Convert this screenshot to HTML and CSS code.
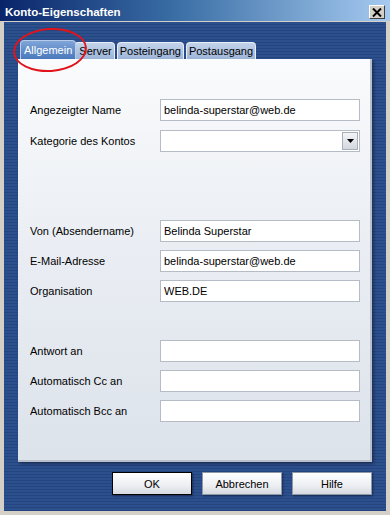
FILE: index.html
```html
<!DOCTYPE html>
<html lang="de">
<head>
  <meta charset="UTF-8">
  <title>Konto-Eigenschaften</title>
  <link rel="stylesheet" href="styles.css">
</head>
<body>
  <div class="window">
    <div class="titlebar">
      <span class="title">Konto-Eigenschaften</span>
      <span class="close-btn">
        <svg width="10" height="9" viewBox="0 0 10 9"><path d="M1 0.5 L9 8.5 M9 0.5 L1 8.5" stroke="#000" stroke-width="2"/></svg>
      </span>
    </div>

    <div class="dialog-body">
      <div class="tabs">
        <div class="tab active">Allgemein</div>
        <div class="tab tab-server">Server</div>
        <div class="tab">Posteingang</div>
        <div class="tab">Postausgang</div>
      </div>

      <div class="panel">
        <div class="group group-first">
          <div class="row">
            <label>Angezeigter Name</label>
            <div class="field">belinda-superstar@web.de</div>
          </div>
          <div class="row">
            <label>Kategorie des Kontos</label>
            <div class="field select">
              <span class="drop-btn">
                <svg width="7" height="4" viewBox="0 0 7 4"><path d="M0 0 H7 L3.5 4 Z" fill="#000"/></svg>
              </span>
            </div>
          </div>
        </div>

        <div class="group group-sender">
          <div class="row">
            <label>Von (Absendername)</label>
            <div class="field">Belinda Superstar</div>
          </div>
          <div class="row">
            <label>E-Mail-Adresse</label>
            <div class="field">belinda-superstar@web.de</div>
          </div>
          <div class="row">
            <label>Organisation</label>
            <div class="field">WEB.DE</div>
          </div>
        </div>

        <div class="group group-reply">
          <div class="row">
            <label>Antwort an</label>
            <div class="field"></div>
          </div>
          <div class="row">
            <label>Automatisch Cc an</label>
            <div class="field"></div>
          </div>
          <div class="row">
            <label>Automatisch Bcc an</label>
            <div class="field"></div>
          </div>
        </div>
      </div>

      <div class="buttons">
        <button class="btn btn-default">OK</button>
        <button class="btn">Abbrechen</button>
        <button class="btn">Hilfe</button>
      </div>
    </div>

    <!-- red highlight around the first tab -->
    <div class="highlight"></div>
  </div>
</body>
</html>
```

FILE: styles.css
```css
body {
  margin: 0;
  padding: 0;
  background-color: #d4d0c8;
  font-family: 'Liberation Sans', Arial, sans-serif;
  font-size: 11px;
}
.window {
  position: relative;
  width: 390px;
  height: 515px;
  box-sizing: border-box;
  border: 4px solid #d4d0c8;
  border-top: none;
  display: flex;
  flex-direction: column;
  background-color: #d4d0c8;
}
.titlebar {
  height: 22px;
  box-sizing: border-box;
  margin: 0 -4px;
  padding: 3px 4px 0 5px;
  display: flex;
  align-items: center;
  justify-content: space-between;
  background: linear-gradient(to right, #0a246a 0%, #3a6ea5 45%, #a6caf0 100%);
  border-bottom: 1px solid #d4d0c8;
}
.title {
  color: white;
  font-weight: bold;
  font-size: 11.5px;
}
.close-btn {
  width: 16px;
  height: 14px;
  box-sizing: border-box;
  background-color: #d4d0c8;
  border: 1px solid;
  border-color: #fff #404040 #404040 #fff;
  display: flex;
  align-items: center;
  justify-content: center;
  margin-right: 1px;
}
.dialog-body {
  flex: 1;
  padding: 18px 14px 0 14px;
  background: repeating-linear-gradient(to bottom, #2c4f8e 0px, #2c4f8e 2px, #25457f 2px, #25457f 3px);
  display: flex;
  flex-direction: column;
}
.tabs {
  display: flex;
  align-items: flex-end;
  height: 19px;
  padding-left: 2px;
  gap: 2px;
}
.tab {
  height: 17px;
  padding: 0 2px;
  box-sizing: border-box;
  display: flex;
  align-items: center;
  color: #000;
  background: linear-gradient(to bottom, #c3d3ea, #9db5d9);
  border: 1px solid #e8eef8;
  border-bottom: none;
  border-radius: 4px 4px 0 0;
}
.tab.active {
  height: 19px;
  padding: 0 3px;
  color: white;
  background: linear-gradient(to bottom, #7fa5d8, #4a78bc);
  border-color: #b8cbe8;
  position: relative;
  z-index: 1;
}
.tab-server {
  margin-left: -4px;
  padding-left: 4px;
}
.panel {
  height: 403px;
  box-sizing: border-box;
  padding: 40px 10px 0 12px;
  background: linear-gradient(to bottom, #fafbfc 0%, #e9edf3 50%, #dde3eb 100%);
  border-right: 2px solid #b9c0cb;
  border-bottom: 2px solid #b9c0cb;
  box-shadow: 2px 2px 3px rgba(0,0,0,0.35);
}
.group {
  display: flex;
  flex-direction: column;
  gap: 8px;
}
.group-first {
  gap: 9px;
}
.group-sender {
  margin-top: 68px;
}
.group-reply {
  margin-top: 38px;
}
.row {
  display: flex;
  align-items: center;
  height: 22px;
}
.row label {
  width: 130px;
  color: #000;
}
.field {
  position: relative;
  width: 200px;
  height: 22px;
  box-sizing: border-box;
  background-color: white;
  border: 1px solid #b6bcc6;
  padding: 0 3px;
  display: flex;
  align-items: center;
  color: #000;
}
.drop-btn {
  position: absolute;
  right: 1px;
  top: 1px;
  width: 16px;
  height: 18px;
  box-sizing: border-box;
  background: linear-gradient(to bottom, #f4f5f7, #d3d7de);
  border: 1px solid #a9afb9;
  display: flex;
  align-items: center;
  justify-content: center;
}
.buttons {
  display: flex;
  justify-content: flex-end;
  gap: 10px;
  margin-top: 10px;
}
.btn {
  width: 80px;
  height: 23px;
  font-family: 'Liberation Sans', Arial, sans-serif;
  font-size: 11px;
  color: #000;
  background: linear-gradient(to bottom, #ffffff 0%, #eceef2 60%, #d6dae1 100%);
  border: 1px solid #8f98a6;
  padding: 0;
  box-shadow: 1px 1px 2px rgba(0,0,0,0.4);
}
.btn-default {
  border: 1px solid #000;
}
.highlight {
  position: absolute;
  left: 9px;
  top: 28px;
  width: 70px;
  height: 40px;
  border: 2px solid #e0141a;
  border-radius: 50%;
  transform: rotate(-4deg);
  z-index: 2;
}
```
